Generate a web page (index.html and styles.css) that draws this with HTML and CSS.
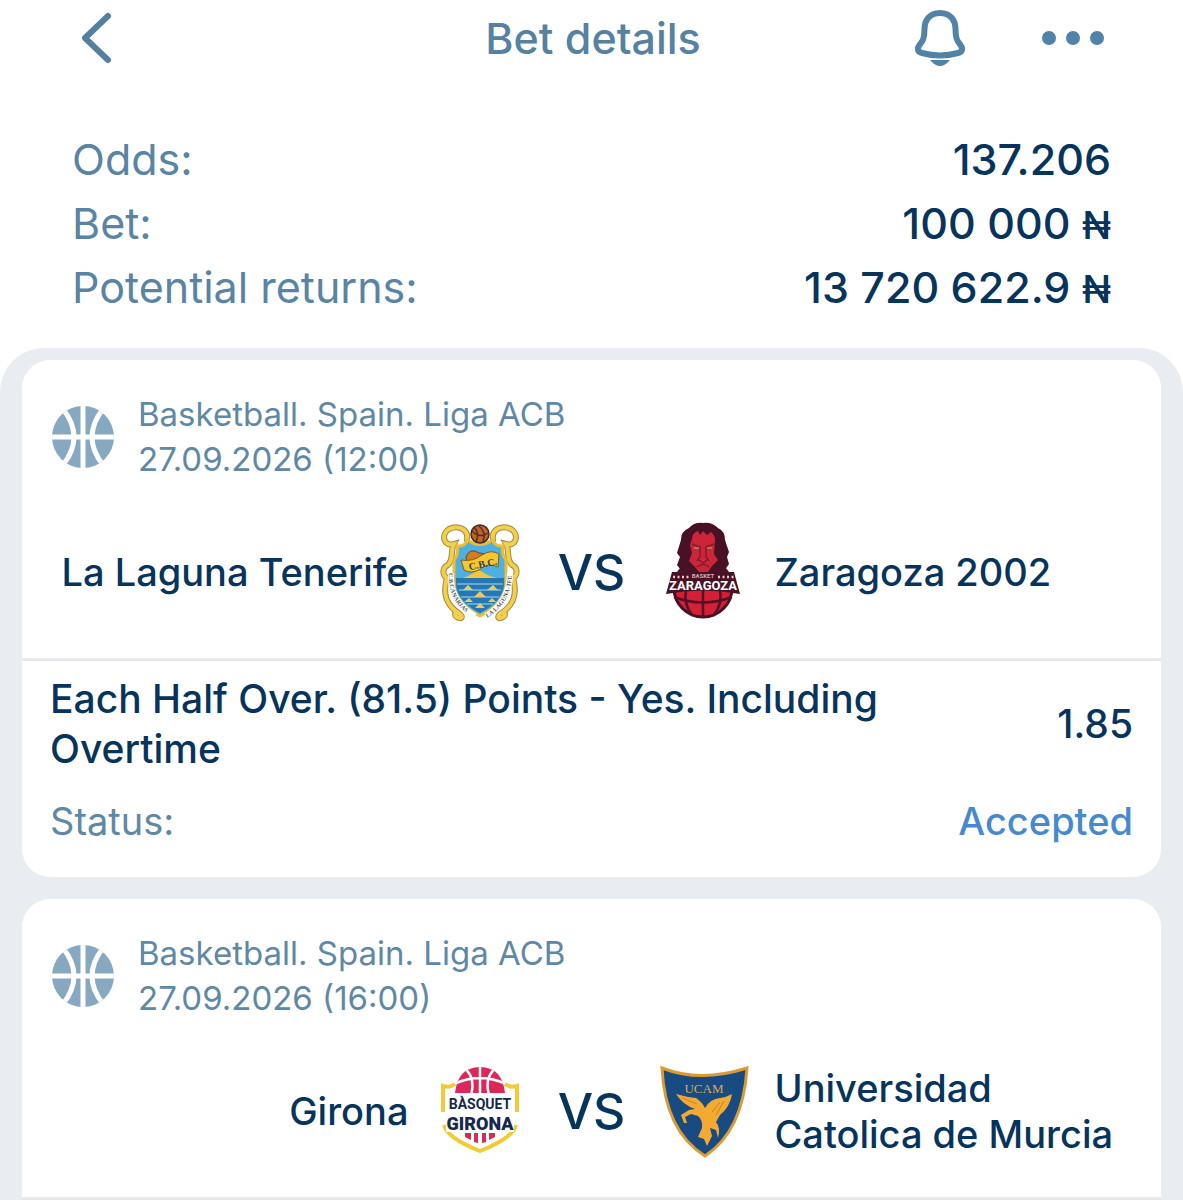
FILE: index.html
```
<!DOCTYPE html>
<html lang="en">

<head>
    <meta charset="UTF-8">
    <meta name="viewport" content="width=device-width, initial-scale=1.0">
    <title>Bet details</title>
    <link rel="stylesheet" href="styles.css">
</head>

<body>
    <!-- shared ball icon -->
    <svg class="sprite" aria-hidden="true">
        <symbol id="ball" viewBox="0 0 62 62">
            <clipPath id="ballClip"><circle cx="31" cy="31" r="31"/></clipPath>
            <g clip-path="url(#ballClip)">
                <rect width="62" height="62" fill="#86a9c1"/>
                <path d="M31 0V62M0 31H62M11 3Q33 31 11 59M51 3Q29 31 51 59" fill="none" stroke="#fff" stroke-width="5"/>
            </g>
        </symbol>
    </svg>

    <header class="topbar">
        <button class="icon-btn" aria-label="Back">
            <svg width="30" height="52" viewBox="0 0 30 52">
                <path d="M26 4L3 26L26 48" fill="none" stroke="#557f9f" stroke-width="6" stroke-linecap="round" stroke-linejoin="round"/>
            </svg>
        </button>
        <h1>Bet details</h1>
        <div class="actions">
            <button class="icon-btn" aria-label="Notifications">
                <svg width="50" height="58" viewBox="0 0 50 58">
                    <path d="M25 4C14 4 9.500 12 9.500 20C9.500 29 8 32 4.500 36C1.500 40 3 43 7 44C18 47 32 47 43 44C47 43 48.500 40 45.500 36C42 32 40.500 29 40.500 20C40.500 12 36 4 25 4Z" fill="none" stroke="#5083a5" stroke-width="6"/>
                    <path d="M15 51H35Q25 63 15 51Z" fill="#5083a5"/>
                </svg>
            </button>
            <button class="icon-btn" aria-label="More">
                <svg width="62" height="14" viewBox="0 0 62 14" fill="#5083a5">
                    <circle cx="7" cy="7" r="7"/>
                    <circle cx="31" cy="7" r="7"/>
                    <circle cx="55" cy="7" r="7"/>
                </svg>
            </button>
        </div>
    </header>

    <dl class="summary">
        <div><dt>Odds:</dt><dd>137.206</dd></div>
        <div><dt>Bet:</dt><dd>100 000 <span class="naira">₦</span></dd></div>
        <div><dt>Potential returns:</dt><dd>13 720 622.9 <span class="naira">₦</span></dd></div>
    </dl>

    <main class="events">
        <article class="card">
            <div class="event-info">
                <svg class="sport"><use href="#ball"/></svg>
                <p>Basketball. Spain. Liga ACB<br>27.09.2026 (12:00)</p>
            </div>
            <div class="teams">
                <span class="team home">La Laguna Tenerife</span>
                <svg class="logo" viewBox="1 2 100 110" aria-hidden="true">
                    <!-- scroll frame -->
                    <g fill="none" stroke-linecap="round">
                        <path d="M37 25C39 13 27 10 19 14C11 19 13 32 24 29C20 37 24 44 18 50C11 53 13 61 17 63C12 80 17 91 30 99C36 105 25 104 25 99M63 25C61 13 73 10 81 14C89 19 87 32 76 29C80 37 76 44 82 50C89 53 87 61 83 63C88 80 83 91 70 99C64 105 75 104 75 99" stroke="#a08a40" stroke-width="6"/>
                        <path d="M37 25C39 13 27 10 19 14C11 19 13 32 24 29C20 37 24 44 18 50C11 53 13 61 17 63C12 80 17 91 30 99C36 105 25 104 25 99M63 25C61 13 73 10 81 14C89 19 87 32 76 29C80 37 76 44 82 50C89 53 87 61 83 63C88 80 83 91 70 99C64 105 75 104 75 99" stroke="#f2cf4c" stroke-width="4"/>
                    </g>
                    <!-- shield -->
                    <path d="M27 31Q34 32 38 25Q50 34 62 25Q66 32 73 31Q71 39 76 45V70Q74 89 50 101Q26 89 24 70V45Q29 39 27 31Z" fill="#4fafe0" stroke="#e9bd35" stroke-width="3"/>
                    <path d="M26 63H74V70Q72 87 50 98Q28 87 26 70Z" fill="#2777b5"/>
                    <path d="M33 63Q42 60 48 54Q57 61 67 63Z" fill="#f3c63d"/>
                    <path d="M27 69H73M29 75H71M31 82H69M37 89H63" stroke="#75bde1" stroke-width="1.500"/>
                    <path d="M33 75L38 70L43 75ZM57 75L63 70L68 75ZM44 82L50 76L56 82ZM34 87L39 83L43 87ZM58 87L62 83L66 87ZM45 93L50 88L55 93Z" fill="#e7cc61"/>
                    <path d="M36 42Q40 32 49 38L57 39L48 43L37 47Z" fill="#d97920" stroke="#5d4b26"/>
                    <path d="M31 45Q43 47 52 40Q61 34 69 39L68 52Q58 47 49 55Q41 59 34 55Z" fill="#f5c62d" stroke="#756027"/>
                    <text x="38" y="53" transform="rotate(-12 50 47)" class="crest-serif">C.B.C.</text>
                    <!-- side ribbons -->
                    <path id="tfLeft" d="M21 58Q19 86 45 101" fill="none" stroke="#fff" stroke-width="6"/>
                    <path id="tfRight" d="M56 101Q80 87 80 57" fill="none" stroke="#fff" stroke-width="6"/>
                    <text class="crest-ribbon" dy="2"><textPath href="#tfLeft">C.B.CANARIAS</textPath></text>
                    <text class="crest-ribbon" dy="2"><textPath href="#tfRight">LA LAGUNA-TFE</textPath></text>
                    <!-- ball on top -->
                    <circle cx="50" cy="19" r="9" fill="#bf642c" stroke="#472b20" stroke-width="1.500"/>
                    <path d="M42 16Q50 24 58 18M48 10Q57 17 53 27M44 12Q50 18 46 27" fill="none" stroke="#55301e" stroke-width="1.500"/>
                </svg>
                <span class="vs">VS</span>
                <svg class="logo" viewBox="-2 2 100 110" aria-hidden="true">
                    <circle cx="48" cy="73" r="29" fill="#d51f35" stroke="#451225" stroke-width="3"/>
                    <path d="M48 70V103M19 82Q48 93 77 82M32 72Q27 88 38 101M64 72Q69 88 58 101M20 60Q30 54 35 48M76 60Q66 54 61 48" fill="none" stroke="#541126" stroke-width="2.500"/>
                    <!-- mane and face -->
                    <path d="M48 8Q57 7 63 13Q70 16 70 25L74 37L72 42L74 49L67 59H29L22 50L25 42L22 38L26 25Q26 16 34 13Q39 7 48 8Z" fill="#481126"/>
                    <path d="M37 24Q37 18 43 16L45 20L48 16L52 20L56 17Q60 20 60 25L59 39L63 45L57 51L53 57H44L39 51L34 46L37 38L35 30Z" fill="#cc2438"/>
                    <path d="M37 29L45 32V42L42 46M59 29L51 32V42L54 46M44 45L48 48L52 45M42 52Q48 47 54 52" fill="none" stroke="#801b30" stroke-width="1.500"/>
                    <path d="M39 33H44M52 33H57" stroke="#b77342" stroke-width="2"/>
                    <!-- name plate -->
                    <path d="M17 57H79L85 79Q48 72 11 79Z" fill="#481226"/>
                    <path d="M18 62H34M63 62H79" fill="none" stroke="#f1c8cc" stroke-width="2.500" stroke-dasharray="2 2.500"/>
                    <text x="48" y="63" class="plate-small">BASKET</text>
                    <text x="48" y="75" class="plate-name">ZARAGOZA</text>
                </svg>
                <span class="team">Zaragoza 2002</span>
            </div>
            <section class="bet">
                <div class="row">
                    <h2>Each Half Over. (81.5) Points - Yes. Including Overtime</h2>
                    <strong>1.85</strong>
                </div>
                <div class="row status">
                    <span>Status:</span>
                    <span class="accepted">Accepted</span>
                </div>
            </section>
        </article>

        <article class="card open">
            <div class="event-info">
                <svg class="sport"><use href="#ball"/></svg>
                <p>Basketball. Spain. Liga ACB<br>27.09.2026 (16:00)</p>
            </div>
            <div class="teams">
                <span class="team home">Girona</span>
                <svg class="logo" viewBox="1 1 100 110" aria-hidden="true">
                    <path d="M25 29Q20 33 13 31V57M75 29Q80 33 87 31V57M14 70Q17 83 50 96Q83 83 86 70" fill="none" stroke="#f0cb35" stroke-width="4"/>
                    <!-- half ball -->
                    <clipPath id="halfBall"><path d="M25 38Q28 12 50 12Q72 12 75 38Z"/></clipPath>
                    <g clip-path="url(#halfBall)">
                        <rect x="20" y="10" width="60" height="30" fill="#dc2859"/>
                        <path d="M50 10V40M20 31Q35 23 50 23Q65 23 80 31M34 13Q46 22 41 40M66 13Q54 22 59 40" fill="none" stroke="#fff" stroke-width="2.500"/>
                    </g>
                    <path d="M35 78H41V85L35 82ZM44 78H48V88L44 87ZM52 78H56V87L52 88ZM59 78H65V82L59 85Z" fill="#d32d55"/>
                    <path d="M22 39H78V57H84V77H16V57H22Z" fill="#fff"/>
                    <text x="50" y="54" class="girona-top">BÀSQUET</text>
                    <text x="50" y="75" class="girona-name">GIRONA</text>
                </svg>
                <span class="vs">VS</span>
                <svg class="logo" viewBox="-3 1 100 110" aria-hidden="true">
                    <path d="M11 13Q49 28 96 13Q92 76 54 101Q14 76 11 13Z" transform="translate(-5 0)" fill="#174b82" stroke="#dc9b32" stroke-width="3"/>
                    <text x="48" y="38" class="ucam">UCAM</text>
                    <!-- winged horse -->
                    <path d="M20 39Q30 42 40 43Q46 47 49 53Q54 44 64 43Q71 42 76 39Q74 52 64 60L60 67Q65 73 62 83L60 75L54 73L56 81L51 91L48 84L42 82L46 73Q47 65 42 61L35 59L29 62L31 68L28 68L25 60L33 55L39 54Q27 50 20 39Z" fill="#f3aa32"/>
                    <path d="M26 43L41 49M64 47L56 57M68 46L60 60" stroke="#c78429" stroke-width="1"/>
                </svg>
                <span class="team">Universidad<br>Catolica de Murcia</span>
            </div>
        </article>
    </main>
</body>

</html>
```
FILE: styles.css
```
* {
    box-sizing: border-box;
}

body {
    margin: 0;
    background: #fff;
    color: #07345d;
    font-family: Inter, 'Liberation Sans', sans-serif;
}

h1, h2, p, dl, dd {
    margin: 0;
    font-weight: 500;
}

svg {
    display: block;
}

.sprite {
    position: absolute;
    width: 0;
    height: 0;
}

.topbar {
    display: grid;
    grid-template-columns: 1fr auto 1fr;
    align-items: center;
    height: 76px;
    padding: 0 79px 0 82px;
}

.topbar h1 {
    color: #5681a0;
    font-size: 43px;
    line-height: 76px;
}

.icon-btn {
    padding: 0;
    border: none;
    background: none;
    cursor: pointer;
}

.actions {
    display: flex;
    justify-content: flex-end;
    align-items: center;
    gap: 77px;
}

.summary {
    padding: 51px 72px 29px;
    font-size: 43px;
    line-height: 64px;
}

.summary div {
    display: flex;
    justify-content: space-between;
}

.summary dt {
    color: #5a84a3;
}

.summary dt,
.event-info p {
    font-weight: 400;
}

.naira {
    font-size: 38px;
    line-height: 1;
}

.events {
    display: flex;
    flex-direction: column;
    gap: 22px;
    padding: 12px 22px 0;
    border-radius: 44px 44px 0 0;
    background: #e9edf2;
}

.card {
    border-radius: 28px;
    background: #fff;
}

.card.open {
    border-radius: 28px 28px 0 0;
    border-bottom: 3px solid #e7e9ee;
}

.event-info {
    display: flex;
    align-items: center;
    gap: 24px;
    padding: 32px 30px 35px;
}

.event-info p {
    color: #5f88a5;
    font-size: 33px;
    line-height: 45px;
}

.sport {
    width: 62px;
    height: 62px;
}

.teams {
    display: grid;
    grid-template-columns: 1fr 100px 122px 100px 1fr;
    align-items: center;
    padding: 0 30px 31px;
}

.team {
    padding: 0 22px;
    font-size: 38px;
    font-weight: 500;
    line-height: 46px;
}

.team:last-child {
    padding-right: 0;
}

.home {
    padding-left: 0;
    text-align: right;
}

.vs {
    font-size: 50px;
    font-weight: 500;
    line-height: 60px;
    text-align: center;
}

.logo {
    width: 100px;
    height: 110px;
}

.bet {
    padding: 13px 28px 31px;
    border-top: 3px solid #e7e9ee;
    font-size: 39px;
    line-height: 50px;
}

.bet h2 {
    max-width: 860px;
    font-size: 39px;
}

.bet strong {
    font-weight: 500;
}

.row {
    display: flex;
    justify-content: space-between;
    align-items: center;
}

.status {
    margin-top: 22px;
    color: #5f88a5;
    font-size: 38px;
}

.accepted {
    color: #4789cf;
    font-weight: 500;
}

/* lettering inside the crests */
.crest-serif {
    font: bold 10px 'Liberation Serif', serif;
    fill: #28446a;
}

.crest-ribbon {
    font: bold 6px 'Liberation Serif', serif;
    fill: #4d5360;
}

.plate-small {
    font: bold 6px Roboto, sans-serif;
    text-anchor: middle;
    fill: #d9a9ae;
}

.plate-name {
    font: bold 13px Roboto, sans-serif;
    text-anchor: middle;
    fill: #fff;
}

.girona-top {
    font: bold 14px Roboto, sans-serif;
    text-anchor: middle;
    fill: #15294a;
}

.girona-name {
    font: 900 18px Roboto, sans-serif;
    text-anchor: middle;
    fill: #15294a;
}

.ucam {
    font: 13px 'Liberation Serif', serif;
    text-anchor: middle;
    fill: #dda955;
}
```
